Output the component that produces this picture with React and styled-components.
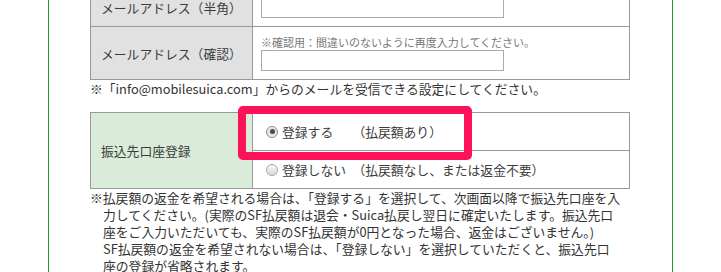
import styled, { createGlobalStyle } from 'styled-components';

const GlobalStyle = createGlobalStyle`
  html, body {
    margin: 0;
    padding: 0;
    background: #fff;
    overflow: hidden;
  }
  body {
    font-family: "Noto Sans CJK JP", "Noto Sans", sans-serif;
    color: #333;
    font-size: 12.8px;
  }
`;

const Frame = styled.div`
  margin: -12px 0 0 48px;
  width: 540px;
  min-height: 320px;
  padding: 0 42px 0 41px;
  border-left: 1px solid #229a22;
  border-right: 1px solid #229a22;
`;

const TableWrap = styled.div`
  position: relative;
`;

const FormTable = styled.table`
  width: 540px;
  table-layout: fixed;
  border-collapse: collapse;
`;

const LabelCell = styled.th`
  width: 162px;
  padding: 0 0 0 10px;
  border: 1px solid #999;
  background: ${p => (p.$tone === 'green' ? '#d9ecd9' : '#e1e1e1')};
  color: #3c3c3c;
  font-weight: normal;
  font-size: 12.8px;
  text-align: left;
  vertical-align: middle;
  box-sizing: border-box;
`;

const FieldCell = styled.td`
  padding: ${p => p.$pad || '8px 8px'};
  border: 1px solid #999;
  height: ${p => p.$h}px;
  box-sizing: border-box;
  vertical-align: middle;
`;

const TextBox = styled.div`
  width: 243px;
  height: 21px;
  box-sizing: border-box;
  border: 1px solid #aaa;
  background: #fff;
`;

const Hint = styled.div`
  font-size: 11px;
  line-height: 16px;
  color: #777;
`;

const Note = styled.p`
  margin: 0 0 ${p => p.$mb || 0}px;
  line-height: 17px;
  font-size: 12.8px;
  color: #333;
  white-space: nowrap;
`;

const HangNote = styled(Note)`
  padding-left: 13px;
  text-indent: -13px;
`;

const RadioRow = styled.label`
  display: flex;
  align-items: center;
  gap: 4px;
  font-size: 12.8px;
  color: #3c3c3c;
  white-space: pre;
`;

const RadioDot = styled.span`
  width: 12px;
  height: 12px;
  box-sizing: border-box;
  border-radius: 50%;
  border: 1px solid ${p => (p.$on ? '#8c8c8c' : '#a8a8a8')};
  background: ${p => (p.$on ? '#e6e6e6' : 'linear-gradient(#fafafa, #d8d8d8)')};
  display: flex;
  align-items: center;
  justify-content: center;

  &::after {
    content: '';
    width: 5px;
    height: 5px;
    border-radius: 50%;
    background: ${p => (p.$on ? '#4a4a4a' : 'transparent')};
  }
`;

const Highlight = styled.div`
  position: absolute;
  left: 148px;
  top: -6px;
  width: 234px;
  height: 54px;
  box-sizing: border-box;
  border: 8px solid #fd1158;
  border-radius: 5px;
  pointer-events: none;
`;

const Radio = ({ on, children }) => (
  <RadioRow>
    <RadioDot $on={on} />
    {children}
  </RadioRow>
);

export default function App() {
  return (
    <>
      <GlobalStyle />
      <Frame>
        <FormTable>
          <tbody>
            <tr>
              <LabelCell>メールアドレス（半角）</LabelCell>
              <FieldCell $h={38}>
                <TextBox />
              </FieldCell>
            </tr>
            <tr>
              <LabelCell>メールアドレス（確認）</LabelCell>
              <FieldCell $h={53} $pad="7px 8px 8px">
                <Hint>※確認用：間違いのないように再度入力してください。</Hint>
                <TextBox />
              </FieldCell>
            </tr>
          </tbody>
        </FormTable>
        <Note $mb={15}>※「info@mobilesuica.com」からのメールを受信できる設定にしてください。</Note>
        <TableWrap>
          <FormTable>
            <tbody>
              <tr>
                <LabelCell rowSpan={2} $tone="green">振込先口座登録</LabelCell>
                <FieldCell $h={38} $pad="0 8px 0 13px">
                  <Radio on>登録する　　（払戻額あり）</Radio>
                </FieldCell>
              </tr>
              <tr>
                <FieldCell $h={38} $pad="0 8px 0 13px">
                  <Radio>登録しない　（払戻額なし、または返金不要）</Radio>
                </FieldCell>
              </tr>
            </tbody>
          </FormTable>
          <Highlight />
        </TableWrap>
        <HangNote>
          ※払戻額の返金を希望される場合は、「登録する」を選択して、次画面以降で振込先口座を入<br />
          力してください。(実際のSF払戻額は退会・Suica払戻し翌日に確定いたします。振込先口<br />
          座をご入力いただいても、実際のSF払戻額が0円となった場合、返金はございません。)<br />
          SF払戻額の返金を希望されない場合は、「登録しない」を選択していただくと、振込先口<br />
          座の登録が省略されます。
        </HangNote>
      </Frame>
    </>
  );
}
